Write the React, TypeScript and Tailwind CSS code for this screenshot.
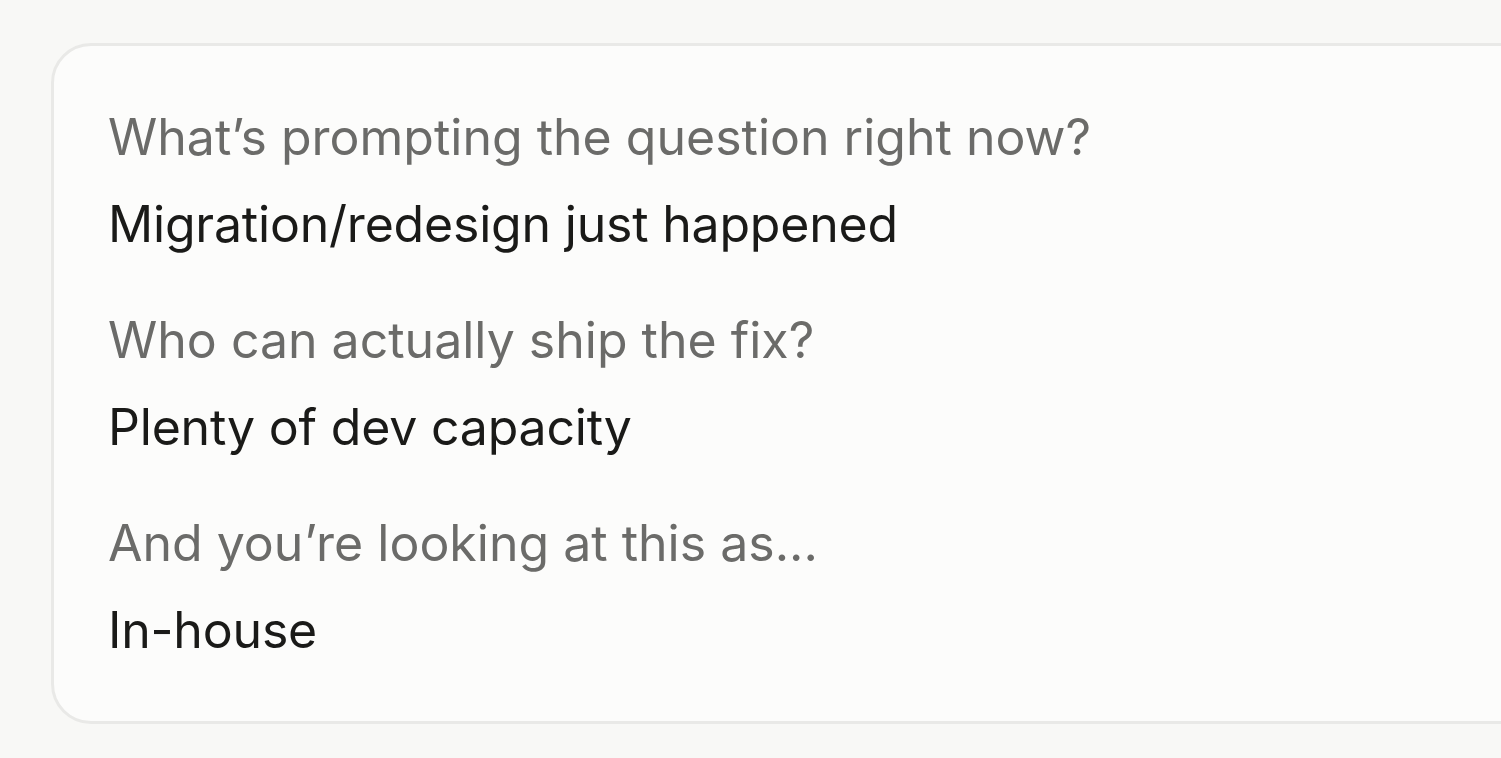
import React from 'react'

type Answer = {
  question: string
  answer: string
}

const answers: Answer[] = [
  { question: 'What’s prompting the question right now?', answer: 'Migration/redesign just happened' },
  { question: 'Who can actually ship the fix?', answer: 'Plenty of dev capacity' },
  { question: 'And you’re looking at this as...', answer: 'In-house' },
]

export default function App() {
  return (
    <div
      className="h-[758px] w-full overflow-hidden bg-[#f8f8f6] pl-[51px] pt-[43px]"
      style={{ fontFamily: 'Inter, "Noto Sans", sans-serif' }}
    >
      {/* Summary card, runs off the right edge */}
      <div className="flex w-[1520px] flex-col gap-[52px] rounded-[40px] border-[3px] border-[#e9e9e7] bg-[#fcfcfb] pb-[59px] pl-[54px] pt-[59px]">
        {answers.map((item, i) => (
          <div key={i} className="flex flex-col gap-[23px]">
            <p className="text-[50px] leading-[64px] text-[#6b6b69]">{item.question}</p>
            <p className="text-[50px] leading-[64px] tracking-[-0.2px] text-[#1a1a18]">{item.answer}</p>
          </div>
        ))}
      </div>
    </div>
  )
}
